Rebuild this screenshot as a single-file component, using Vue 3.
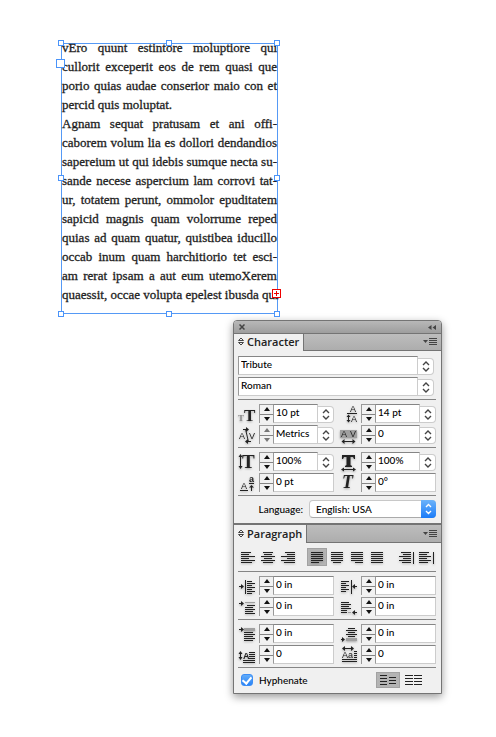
<script setup>
import { ref } from "vue"

// Text frame content, one entry per composed line
const lines = [
  { text: "vEro quunt estintore moluptiore qui" },
  { text: "cullorit exceperit eos de rem quasi que" },
  { text: "porio quias audae conserior maio con et" },
  { text: "percid quis moluptat.", last: true },
  { text: "Agnam sequat pratusam et ani offi-" },
  { text: "caborem volum lia es dollori dendandios" },
  { text: "sapereium ut qui idebis sumque necta su-" },
  { text: "sande necese aspercium lam corrovi tat-" },
  { text: "ur, totatem perunt, ommolor epuditatem" },
  { text: "sapicid magnis quam volorrume reped" },
  { text: "quias ad quam quatur, quistibea iducillo" },
  { text: "occab inum quam harchitiorio tet esci-" },
  { text: "am rerat ipsam a aut eum utemoXerem" },
  { text: "quaessit, occae volupta epelest ibusda qui" },
]

const handles = ["tl", "tc", "tr", "ml", "mr", "bl", "bc", "br"]

// Icons: fill = solid shapes, line = 1px strokes, grey = muted areas, texts = letters
const icons = {
  size: {
    texts: [
      { t: "T", x: 0, y: 17, size: 9, weight: 700, color: "#888" },
      { t: "T", x: 6, y: 17, size: 17, weight: 700 },
    ],
  },
  leading: {
    line: "M7 9.5H17M8.5 12V17",
    fill: "M6.5 13L8.5 10.5L10.5 13ZM6.5 16L8.5 18.5L10.5 16Z",
    texts: [
      { t: "A", x: 10, y: 8, size: 9, sans: true },
      { t: "A", x: 11, y: 18, size: 9, sans: true },
    ],
  },
  kerning: {
    line: "M7.5 4L10.5 17M5 4.5H8M10 16.5H13",
    fill: "M8 2L11 4.5L8 7ZM10 14L7 16.5L10 19Z",
    texts: [
      { t: "A", x: 1, y: 14, size: 9, sans: true },
      { t: "V", x: 11, y: 14, size: 9, sans: true },
    ],
  },
  tracking: {
    grey: "M0 5H17V13H0Z",
    line: "M3 16.5H14",
    fill: "M4.5 14V19L1.5 16.5ZM12.5 14V19L15.5 16.5Z",
    texts: [
      { t: "A", x: 1, y: 12, size: 9, sans: true },
      { t: "V", x: 10, y: 12, size: 9, sans: true },
    ],
  },
  vscale: {
    line: "M2.5 4V15",
    fill: "M0.5 5L2.5 2L4.5 5ZM0.5 14L2.5 17L4.5 14Z",
    texts: [{ t: "T", x: 4, y: 16, size: 19, weight: 700 }],
  },
  hscale: {
    line: "M3 17.5H14",
    fill: "M4 15.5V19.5L1 17.5ZM13 15.5V19.5L16 17.5ZM2 3H15V7H14L13 5H10.5V13L12 14V15H5V14L6.5 13V5H4L3 7H2Z",
  },
  baseline: {
    line: "M2 17.5H10M11 10.5H16M13.5 13V18",
    fill: "M11 14.5L13.5 12L16 14.5Z",
    texts: [
      { t: "A", x: 3, y: 16, size: 9, sans: true },
      { t: "a", x: 11, y: 9, size: 9, sans: true, weight: 700 },
    ],
  },
  skew: {
    texts: [{ t: "T", x: 2, y: 15, size: 18, weight: 700, italic: true }],
  },
  leftIndent: {
    line: "M1 10.5H4M7.5 4V18M9 5.5H14M9 7.5H17M9 9.5H14M9 11.5H17M9 13.5H14M9 15.5H17M9 17.5H14",
    fill: "M3 8L6 10.5L3 13Z",
  },
  rightIndent: {
    line: "M1 5.5H9M1 7.5H6M1 9.5H9M1 11.5H6M1 13.5H9M1 15.5H6M11.5 4V18M14 10.5H17",
    fill: "M15 8L12 10.5L15 13Z",
  },
  firstLine: {
    grey: "M7 5H17V6H7Z",
    line: "M1 6.5H4M9 8.5H17M7 10.5H15M7 12.5H17M7 14.5H15M7 16.5H17",
    fill: "M3 4L6 6.5L3 9Z",
  },
  lastLine: {
    grey: "M8 15H11V16H8Z",
    line: "M1 5.5H9M1 7.5H11M1 9.5H9M1 11.5H11M1 13.5H7M1 15.5H7M14 15.5H17",
    fill: "M15 13L12 15.5L15 18Z",
  },
  spaceBefore: {
    grey: "M6 4H17V7H6Z",
    line: "M1 5.5H4M6 8.5H15M6 10.5H17M6 12.5H15M6 14.5H17M6 16.5H15",
    fill: "M3 3L6 5.5L3 8Z",
  },
  spaceAfter: {
    grey: "M6 14H17V17H6Z",
    line: "M1 15.5H4M8 4.5H15M6 6.5H17M8 8.5H15M6 10.5H17M8 12.5H15",
    fill: "M2 13L5 15.5L2 18Z",
  },
  dropLines: {
    line: "M2.5 8V14M11 7.5H17M11 9.5H17M11 11.5H17M11 13.5H17M5 15.5H17M5 17.5H17",
    fill: "M0.5 9L2.5 6L4.5 9ZM0.5 12L2.5 15L4.5 12Z",
    texts: [{ t: "A", x: 5, y: 14, size: 9, sans: true, weight: 700 }],
  },
  dropChars: {
    line: "M4 3.5H12M14 6.5H17M14 8.5H17M14 10.5H17M14 12.5H17M2 14.5H17M2 16.5H17",
    fill: "M5 1V6L2 3.5ZM11 1V6L14 3.5Z",
    texts: [{ t: "Aa", x: 2, y: 13, size: 9, sans: true }],
  },
}

// Character panel
const fonts = ref([
  { id: "family", label: "Font family", value: "Tribute" },
  { id: "style", label: "Font style", value: "Roman" },
])

const sizeFields = ref([
  { id: "size", label: "Font size", value: "10 pt", menu: true },
  { id: "leading", label: "Leading", value: "14 pt", menu: true },
  { id: "kerning", label: "Kerning", value: "Metrics", menu: true, dim: true },
  { id: "tracking", label: "Tracking", value: "0", menu: true },
])

const scaleFields = ref([
  { id: "vscale", label: "Vertical scale", value: "100%", menu: true },
  { id: "hscale", label: "Horizontal scale", value: "100%", menu: true },
  { id: "baseline", label: "Baseline shift", value: "0 pt" },
  { id: "skew", label: "Skew", value: "0°" },
])

// Paragraph panel
const indentFields = ref([
  { id: "leftIndent", label: "Left indent", value: "0 in" },
  { id: "rightIndent", label: "Right indent", value: "0 in" },
  { id: "firstLine", label: "First line indent", value: "0 in" },
  { id: "lastLine", label: "Last line indent", value: "0 in" },
])

const spaceFields = ref([
  { id: "spaceBefore", label: "Space before", value: "0 in" },
  { id: "spaceAfter", label: "Space after", value: "0 in" },
  { id: "dropLines", label: "Drop cap lines", value: "0" },
  { id: "dropChars", label: "Drop cap characters", value: "0" },
])

const alignGroups = [
  [
    { id: "left", label: "Align left", d: "M3 1.5H13M3 3.5H11M3 5.5H17M3 7.5H11M3 9.5H17M3 11.5H14" },
    { id: "center", label: "Align center", d: "M5 1.5H15M6 3.5H14M3 5.5H17M6 7.5H14M3 9.5H17M5 11.5H15" },
    { id: "right", label: "Align right", d: "M7 1.5H17M9 3.5H17M3 5.5H17M9 7.5H17M3 9.5H17M6 11.5H17" },
  ],
  [
    { id: "jleft", label: "Justify left", d: "M4 1.5H16M4 3.5H16M4 5.5H16M4 7.5H16M4 9.5H16M4 11.5H12" },
    { id: "jcenter", label: "Justify center", d: "M4 1.5H16M4 3.5H16M4 5.5H16M4 7.5H16M4 9.5H16M6 11.5H14" },
    { id: "jright", label: "Justify right", d: "M4 1.5H16M4 3.5H16M4 5.5H16M4 7.5H16M4 9.5H16M8 11.5H16" },
    { id: "jall", label: "Justify all", d: "M4 1.5H16M4 3.5H16M4 5.5H16M4 7.5H16M4 9.5H16M4 11.5H16" },
  ],
  [
    { id: "toSpine", label: "Align towards spine", d: "M5 1.5H15M7 3.5H15M3 5.5H15M7 7.5H15M3 9.5H15M6 11.5H15M17.5 1V13" },
    { id: "fromSpine", label: "Align away from spine", d: "M3 1.5H13M3 3.5H11M3 5.5H15M3 7.5H11M3 9.5H15M3 11.5H12M17.5 1V13" },
  ],
]

const align = ref("jleft")
const language = ref("English: USA")
const hyphenate = ref(true)
const grid = ref("none")

const sections = {
  character: [sizeFields, scaleFields],
  paragraph: [indentFields, spaceFields],
}
</script>

<template>
  <main class="canvas">
    <!-- Text frame -->
    <section class="frame">
      <div class="story">
        <div v-for="l in lines" :key="l.text" class="line" :class="{ last: l.last }">{{ l.text }}</div>
      </div>
      <span v-for="h in handles" :key="h" class="handle" :class="h"></span>
      <span class="in-port"></span>
      <svg class="overset" viewBox="0 0 7 7"><path d="M1 3.5H6M3.5 1V6" /></svg>
    </section>

    <!-- Palette -->
    <aside class="palette">
      <header class="titlebar">
        <button type="button" class="plain" aria-label="Close">
          <svg width="6" height="6" viewBox="0 0 6 6"><path d="M0.5 0.5L5.5 5.5M5.5 0.5L0.5 5.5" class="thick" /></svg>
        </button>
        <button type="button" class="plain" aria-label="Collapse">
          <svg width="8" height="5" viewBox="0 0 8 5"><path d="M3.5 0V5L0 2.5ZM8 0V5L4.5 2.5Z" class="solid" /></svg>
        </button>
      </header>

      <template v-for="(groups, name) in sections" :key="name">
        <div class="tabs" :class="name">
          <button type="button" class="tab">
            <svg width="6" height="9" viewBox="0 0 6 9"><path d="M0.5 3.5L3 1L5.5 3.5ZM0.5 5.5L3 8L5.5 5.5Z" class="outline" /></svg>
            <span class="tab-name">{{ name }}</span>
          </button>
          <button type="button" class="plain menu" :aria-label="name + ' menu'">
            <svg width="14" height="8" viewBox="0 0 14 8">
              <path d="M0 2H5L2.5 5Z" class="solid" />
              <path d="M6 0.5H14M6 2.5H14M6 4.5H14M6 6.5H14" class="outline" />
            </svg>
          </button>
        </div>

        <div class="body">
          <div v-if="name === 'character'" class="fonts">
            <div v-for="f in fonts" :key="f.id" class="field">
              <input v-model="f.value" type="text" class="box" :aria-label="f.label" />
              <button type="button" class="drop" :aria-label="f.label + ' list'">
                <svg width="8" height="11" viewBox="0 0 8 11"><path d="M1 4L4 1L7 4M1 7L4 10L7 7" /></svg>
              </button>
            </div>
          </div>

          <div v-else class="aligns">
            <div v-for="(g, i) in alignGroups" :key="i" class="align-group">
              <button
                v-for="a in g"
                :key="a.id"
                type="button"
                class="align"
                :class="{ active: a.id === align }"
                :aria-label="a.label"
                @click="align = a.id"
              >
                <svg width="20" height="13" viewBox="0 0 20 13"><path :d="a.d" /></svg>
              </button>
            </div>
          </div>

          <div v-for="(group, gi) in groups" :key="gi" class="fields">
            <div v-for="f in group.value" :key="f.id" class="field">
              <label class="field-icon" :for="f.id" :title="f.label">
                <svg width="21" height="20" viewBox="0 0 21 20">
                  <path v-if="icons[f.id].grey" :d="icons[f.id].grey" class="i-grey" />
                  <path v-if="icons[f.id].line" :d="icons[f.id].line" class="i-line" />
                  <path v-if="icons[f.id].fill" :d="icons[f.id].fill" class="i-fill" />
                  <text
                    v-for="(t, ti) in icons[f.id].texts"
                    :key="ti"
                    :x="t.x"
                    :y="t.y"
                    :font-size="t.size"
                    :font-weight="t.weight || 400"
                    :font-style="t.italic ? 'italic' : 'normal'"
                    :fill="t.color || '#222'"
                    :class="t.sans ? 'i-sans' : 'i-serif'"
                  >{{ t.t }}</text>
                </svg>
              </label>
              <span class="stepper" :class="{ dim: f.dim }">
                <button type="button" :aria-label="f.label + ' up'">
                  <svg width="6" height="4" viewBox="0 0 6 4"><path d="M0 4L3 0L6 4Z" /></svg>
                </button>
                <button type="button" :aria-label="f.label + ' down'">
                  <svg width="6" height="4" viewBox="0 0 6 4"><path d="M0 0L3 4L6 0Z" /></svg>
                </button>
              </span>
              <input :id="f.id" v-model="f.value" type="text" class="box" :aria-label="f.label" />
              <button v-if="f.menu" type="button" class="drop" :aria-label="f.label + ' list'">
                <svg width="8" height="11" viewBox="0 0 8 11"><path d="M1 4L4 1L7 4M1 7L4 10L7 7" /></svg>
              </button>
            </div>
          </div>

          <div v-if="name === 'character'" class="language">
            <label for="language">Language:</label>
            <div class="select">
              <select id="language" v-model="language">
                <option>English: USA</option>
                <option>English: UK</option>
              </select>
              <svg viewBox="0 0 15 18"><path d="M5 7L7.5 4.5L10 7M5 11L7.5 13.5L10 11" /></svg>
            </div>
          </div>

          <div v-else class="footer">
            <label class="check">
              <input v-model="hyphenate" type="checkbox" />
              Hyphenate
            </label>
            <div class="grids">
              <button type="button" class="grid-btn" :class="{ active: grid === 'none' }" aria-label="Do not align to baseline grid" @click="grid = 'none'">
                <svg width="18" height="12" viewBox="0 0 18 12"><path d="M1 1.5H8M1 4.5H8M1 7.5H8M1 10.5H8M10 3.5H17M10 6.5H17M10 9.5H17" /></svg>
              </button>
              <button type="button" class="grid-btn" :class="{ active: grid === 'align' }" aria-label="Align to baseline grid" @click="grid = 'align'">
                <svg width="18" height="12" viewBox="0 0 18 12"><path d="M0 1.5H8M0 4.5H8M0 7.5H8M0 10.5H8M9 1.5H17M9 4.5H17M9 7.5H17M9 10.5H17" /></svg>
              </button>
            </div>
          </div>
        </div>
      </template>
    </aside>
  </main>
</template>

<style>
body {
  background: #fff;
}
</style>

<style scoped>
* {
  box-sizing: border-box;
}

button,
input,
select {
  margin: 0;
  padding: 0;
  font: inherit;
  color: inherit;
  border: none;
  outline: none;
  border-radius: 0;
}

.canvas {
  display: flex;
  flex-direction: column;
  gap: 6px;
  padding: 43px 54px 43px 61px;
  font-family: Lato, "Open Sans", sans-serif;
  font-size: 10px;
  font-weight: 500;
  color: #000;
}

/* ============ Text frame ============ */
.frame {
  position: relative;
  width: 217px;
  height: 271px;
  border: 1px solid #5599f5;
}

.story {
  margin-top: -6px;
  font-family: "Liberation Serif", serif;
  font-size: 13px;
  font-weight: 400;
  line-height: 19px;
  color: #222;
  -webkit-text-stroke: 0.3px #222;
}

.line {
  white-space: nowrap;
  text-align-last: justify;
}

.line.last {
  text-align-last: left;
}

.handle {
  position: absolute;
  width: 6px;
  height: 6px;
  background: #fff;
  border: 1px solid #4a94fa;
}

.tl, .tc, .tr { top: -4px; }
.ml, .mr { top: 131px; }
.bl, .bc, .br { bottom: -4px; }
.tl, .ml, .bl { left: -4px; }
.tc, .bc { left: 104px; }
.tr, .mr, .br { right: -3px; }

.in-port {
  position: absolute;
  left: -6px;
  top: 15px;
  width: 9px;
  height: 9px;
  background: #fff;
  border: 1px solid #4a94fa;
}

.overset {
  position: absolute;
  right: -4px;
  top: 245px;
  width: 9px;
  height: 9px;
  background: #fff;
  border: 1px solid #e00;
}

.overset path {
  stroke: #e00;
}

/* ============ Palette ============ */
.palette {
  align-self: flex-end;
  width: 209px;
  border: 1px solid #747474;
  border-radius: 4px 4px 0 0;
  background: #f0f0f0;
  box-shadow: 0 3px 9px rgba(0, 0, 0, 0.4);
}

.plain {
  display: flex;
  background: transparent;
}

.thick {
  stroke: #444;
  stroke-width: 1.5;
}

.solid {
  fill: #444;
}

.outline {
  fill: none;
  stroke: #444;
}

.titlebar {
  height: 12px;
  display: flex;
  align-items: center;
  justify-content: space-between;
  padding: 0 5px;
  border-radius: 3px 3px 0 0;
  background: linear-gradient(#b8b8b8, #9e9e9e);
}

.tabs {
  height: 18px;
  display: flex;
  justify-content: space-between;
  border-top: 1px solid #747474;
  background: linear-gradient(#bdbdbd, #acacac);
}

.tabs.paragraph {
  height: 20px;
  border-top-width: 2px;
}

.tab {
  display: flex;
  align-items: center;
  gap: 3px;
  padding: 0 4px 2px 4px;
  background: #f0f0f0;
  border-right: 1px solid #747474;
}

.tab-name {
  font-family: "Open Sans", sans-serif;
  font-size: 11px;
  line-height: 15px;
  font-weight: 600;
  color: #222;
  text-transform: capitalize;
}

.menu {
  flex: 1;
  align-items: center;
  justify-content: flex-end;
  padding-right: 4px;
  border-bottom: 1px solid #747474;
}

.body {
  padding: 5px 5px 5px 4px;
}

/* ============ Fields ============ */
.fonts {
  display: grid;
  gap: 2px;
  padding-right: 2px;
}

.fields {
  display: grid;
  grid-template-columns: 1fr 1fr;
  gap: 2px 6px;
  margin-top: 3px;
  padding-top: 4px;
  border-top: 1px solid #858585;
}

.field {
  display: flex;
  height: 19px;
  min-width: 0;
}

.field-icon {
  width: 21px;
}

.field-icon svg {
  display: block;
  filter: drop-shadow(0 1px 1px rgba(0, 0, 0, 0.3));
}

.i-grey { fill: #a0a0a0; }
.i-line { fill: none; stroke: #222; }
.i-fill { fill: #222; }
.i-serif { font-family: "Liberation Serif", serif; }
.i-sans { font-family: "Liberation Sans", sans-serif; }

.box {
  flex: 1;
  min-width: 0;
  height: 19px;
  padding: 0 2px 3px;
  background: #fff;
  border: 1px solid #ccc;
  border-top-color: #858585;
  border-left-color: #999;
}

.stepper {
  width: 14px;
  display: flex;
  flex-direction: column;
  border-top: 1px solid #999;
  border-left: 1px solid #999;
}

.stepper button {
  flex: 1;
  display: flex;
  align-items: center;
  justify-content: center;
  background: #f2f2f2;
}

.stepper button + button {
  border-top: 1px solid #858585;
}

.stepper path {
  fill: #111;
}

.stepper.dim path {
  fill: #777;
}

.drop {
  width: 16px;
  height: 17px;
  margin-top: 2px;
  display: flex;
  align-items: center;
  justify-content: center;
  background: #fff;
  border: 1px solid #ccc;
  border-left: none;
  border-radius: 0 4px 4px 0;
}

.drop path {
  fill: none;
  stroke: #444;
  stroke-width: 1.4;
}

/* ============ Language ============ */
.language {
  display: flex;
  align-items: center;
  justify-content: flex-end;
  gap: 6px;
  margin-top: 3px;
  padding-top: 4px;
  border-top: 1px solid #858585;
}

.select {
  position: relative;
  width: 127px;
}

.select select {
  display: block;
  appearance: none;
  width: 100%;
  height: 18px;
  padding: 0 18px 0 6px;
  background: #fff;
  border: 1px solid #c8c8c8;
  border-bottom-color: #aaa;
  border-radius: 4px;
}

.select svg {
  position: absolute;
  top: 0;
  right: 0;
  width: 15px;
  height: 18px;
  border-radius: 0 4px 4px 0;
  background: linear-gradient(#6cb3fa, #1a7bf8);
  pointer-events: none;
}

.select path {
  fill: none;
  stroke: #fff;
  stroke-width: 1.4;
}

/* ============ Alignment ============ */
.aligns {
  display: flex;
  justify-content: space-between;
  padding-bottom: 2px;
}

.align-group {
  display: flex;
}

.align {
  width: 20px;
  height: 18px;
  display: flex;
  align-items: center;
  justify-content: center;
  background: transparent;
}

.align svg {
  flex: none;
  filter: drop-shadow(0 1px 1px rgba(0, 0, 0, 0.3));
}

.align path,
.grid-btn path {
  stroke: #222;
}

.align.active,
.grid-btn.active {
  background: #b4b4b4;
  box-shadow: inset 0 0 0 1px #a2a2a2;
}

/* ============ Footer ============ */
.footer {
  display: flex;
  align-items: center;
  justify-content: space-between;
  margin-top: 3px;
  padding-top: 4px;
  border-top: 1px solid #858585;
}

.check {
  display: flex;
  align-items: center;
  gap: 6px;
  padding-left: 3px;
}

.check input {
  appearance: none;
  width: 12px;
  height: 12px;
  display: flex;
  justify-content: center;
  background: #fff;
  border: 1px solid #aaa;
  border-radius: 3px;
}

.check input:checked {
  background: linear-gradient(#62acf9, #2a84f7);
  border-color: #3b8df5;
}

.check input:checked::before {
  content: "";
  width: 4px;
  height: 7px;
  border: solid #fff;
  border-width: 0 2px 2px 0;
  transform: rotate(40deg);
}

.grids {
  display: flex;
  gap: 2px;
  padding-right: 10px;
}

.grid-btn {
  width: 24px;
  height: 16px;
  display: flex;
  align-items: center;
  justify-content: center;
  background: transparent;
}
</style>
